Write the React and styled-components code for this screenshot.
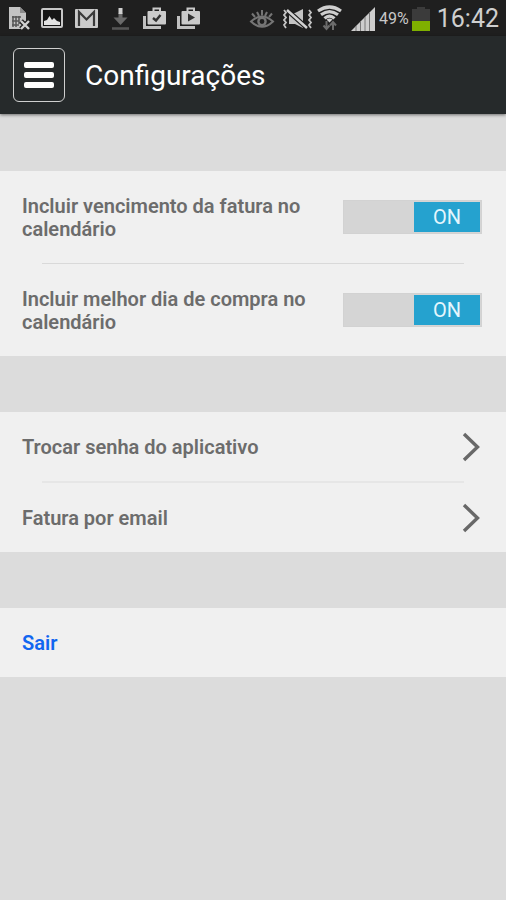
import React, { useState } from 'react'
import styled, { createGlobalStyle } from 'styled-components'

const App = () => {
  const [vencimento, setVencimento] = useState(true)
  const [melhorDia, setMelhorDia] = useState(true)

  return (
    <StPage>
      <GlobalStyle />
      <StatusBar />
      <StHeader>
        <StMenuButton type="button" aria-label="Menu">
          <StMenuLine />
          <StMenuLine />
          <StMenuLine />
        </StMenuButton>
        <StTitle>Configurações</StTitle>
      </StHeader>
      <StContent>
        <StCard>
          <SwitchRow
            label="Incluir vencimento da fatura no calendário"
            checked={vencimento}
            onChange={setVencimento}
          />
          <StDivider $size="1px" $color="#d9d9d9" />
          <SwitchRow
            label="Incluir melhor dia de compra no calendário"
            checked={melhorDia}
            onChange={setMelhorDia}
          />
        </StCard>
        <StCard>
          <LinkRow href="#senha">Trocar senha do aplicativo</LinkRow>
          <StDivider $size="2px" $color="#e6e6e6" />
          <LinkRow href="#fatura">Fatura por email</LinkRow>
        </StCard>
        <StCard>
          <StExitButton type="button">
            <StRowText>Sair</StRowText>
          </StExitButton>
        </StCard>
      </StContent>
    </StPage>
  )
}

export default App

const SwitchRow = ({ label, checked, onChange }) => (
  <StSwitchRow>
    <StRowText>{label}</StRowText>
    <StSwitchInput
      type="checkbox"
      role="switch"
      checked={checked}
      onChange={(e) => onChange(e.target.checked)}
    />
    <StTrack $on={checked} aria-hidden="true">
      <StThumb $on={checked}>{checked ? 'ON' : 'OFF'}</StThumb>
    </StTrack>
  </StSwitchRow>
)

const LinkRow = ({ href, children }) => (
  <StLinkRow href={href}>
    <StRowText>{children}</StRowText>
    <svg width="20" height="30" viewBox="0 0 20 30" fill="none" stroke="#686868" strokeWidth="3.4" aria-hidden="true">
      <path d="M2 2 L15.5 15 L2 28" />
    </svg>
  </StLinkRow>
)

const StatusBar = () => (
  <StStatusBar>
    <StNotifications>
      <StIcon width="24" height="26" viewBox="0 0 24 26">
        <path d="M3 2 H14 L20 8 V24 H3 Z" fill="#c4c4c4" />
        <path d="M14 2 V8 H20" fill="#8c8c8c" />
        <path d="M6 12 H15 M6 16 H13 M6 20 H13 M7 11 V22 M10 11 V22 M13 11 V19" stroke="#555" strokeWidth="1.5" />
        <path d="M15 16 L23 24 M23 16 L15 24" stroke="#1f1f1f" strokeWidth="5" />
        <path d="M15 16 L23 24 M23 16 L15 24" stroke="#d0d0d0" strokeWidth="2.4" />
      </StIcon>
      <StIcon width="24" height="26" viewBox="0 0 24 26">
        <rect x="2" y="4" width="20" height="18" rx="1" fill="#151515" stroke="#c8c8c8" strokeWidth="2" />
        <path d="M4 20 V16 L7 15 L9.5 11 L12 15 L14 13 L17 16 L20 17 V20 Z" fill="#e2e2e2" />
      </StIcon>
      <StIcon width="24" height="26" viewBox="0 0 24 26">
        <rect x="1" y="4" width="23" height="19" rx="1" fill="#cacaca" />
        <path d="M5 21 V7 L12.5 14.5 L20 7 V21" fill="none" stroke="#3a3a3a" strokeWidth="2.2" />
      </StIcon>
      <StIcon width="24" height="26" viewBox="0 0 24 26">
        <path d="M12.5 8 V14" stroke="#6a6a6a" strokeWidth="4" />
        <path d="M12.5 3 V9" stroke="#d0d0d0" strokeWidth="4" />
        <path d="M5.5 12.5 H19.5 L12.5 20 Z" fill="#6a6a6a" />
        <path d="M4 23.5 H21" stroke="#555" strokeWidth="2.6" />
      </StIcon>
      <StIcon width="24" height="26" viewBox="0 0 24 26">
        <Bags />
        <path d="M11 13 L14 15.5 L18.5 10" fill="none" stroke="#303030" strokeWidth="2.4" />
      </StIcon>
      <StIcon width="24" height="26" viewBox="0 0 24 26">
        <Bags />
        <path d="M12 8.5 L19 12.5 L12 16.5 Z" fill="#303030" />
      </StIcon>
    </StNotifications>
    <StSystem>
      <StIcon width="32" height="26" viewBox="0 0 32 26">
        <g fill="none" stroke="#757575" strokeWidth="2">
          <path d="M2 16.5 Q13 6.5 24 16.5 Q13 27 2 16.5 Z" />
          <path d="M3 8.5 L6 12 M8 7 L10 11 M13 5 V10.5 M18 7 L16 11 M23 8.5 L20 12" />
          <circle cx="13" cy="16.5" r="3.6" strokeWidth="2.4" />
        </g>
      </StIcon>
      <StIcon width="32" height="26" viewBox="0 0 32 26">
        <path d="M6 8 H12 L20 4 V23 L12 19 H6 Z" fill="#c4c4c4" />
        <path d="M4 5 L24 23" stroke="#1f1f1f" strokeWidth="5" />
        <path d="M4 5 L24 23" stroke="#d2d2d2" strokeWidth="2.4" />
        <path
          d="M1 5 L3 7.5 L1 10 L3 12.5 L1 15 L3 17.5 L1 20 L3 23 M26 5 L28 7.5 L26 10 L28 12.5 L26 15 L28 17.5 L26 20 L28 23"
          fill="none"
          stroke="#c4c4c4"
          strokeWidth="1.8"
        />
      </StIcon>
      <StIcon width="32" height="26" viewBox="0 0 32 26">
        <g fill="none" stroke="#cfcfcf" strokeWidth="3.2">
          <path d="M1 6 Q12.5 -2 24 6" />
          <path d="M4 9.8 Q12.5 3.5 21 9.8" />
          <path d="M7.5 13.4 Q12.5 9 17.5 13.4" />
        </g>
        <path d="M9.5 14.5 Q12.5 12.5 15.5 14.5 L12.5 17.5 Z" fill="#cfcfcf" />
        <path d="M9.5 16 V24 M6.5 20.5 L9.5 24 L12.5 20.5 M16 25 V18 M13 20.5 L16 17 L19 20.5" fill="none" stroke="#6c6c6c" strokeWidth="2" />
      </StIcon>
      <StIcon width="26" height="26" viewBox="0 0 26 26">
        <path d="M0 26 L24 2 V26 Z" fill="#cdcdcd" />
        <path d="M5 21 V26 M9.5 17 V26 M14 12 V26 M18.5 8 V26" stroke="#777" strokeWidth="1" />
      </StIcon>
      <StBattery>49%</StBattery>
      <StIcon width="24" height="26" viewBox="0 0 24 26">
        <path d="M1 4 H6 V2 H14 V4 H19 V16 H1 Z" fill="#3b3b3b" />
        <path d="M1 16 H19 V26 H1 Z" fill="#7fb000" />
      </StIcon>
      <StClock>16:42</StClock>
    </StSystem>
  </StStatusBar>
)

const Bags = () => (
  <>
    <path d="M2.5 11 V22.5 H19" fill="none" stroke="#c0c0c0" strokeWidth="3" />
    <rect x="5.5" y="6" width="18.5" height="13.5" rx="1" fill="#cacaca" />
    <path d="M11.5 7 V3.5 H18 V7" fill="none" stroke="#cacaca" strokeWidth="2" />
  </>
)

const GlobalStyle = createGlobalStyle`
  * {
    box-sizing: border-box;
  }
  body {
    margin: 0;
    background: #dcdcdc;
    font-family: Roboto, "Liberation Sans", sans-serif;
  }
  button {
    font-family: inherit;
    cursor: pointer;
  }
`

const StPage = styled.div`
  min-height: 100vh;
  background: #dcdcdc;
`

const StStatusBar = styled.div`
  display: flex;
  justify-content: space-between;
  align-items: center;
  height: 36px;
  padding: 0 7px 0 6px;
  background: #1f1f1f;
`

const StNotifications = styled.div`
  display: flex;
  align-items: center;
  gap: 10px;
`

const StSystem = styled.div`
  display: flex;
  align-items: center;
  gap: 2px;
`

const StIcon = styled.svg`
  display: block;
  flex-shrink: 0;
`

const StBattery = styled.span`
  padding-top: 2px;
  color: #c8c8c8;
  font-size: 16px;
  line-height: 24px;
`

const StClock = styled.span`
  padding-top: 2px;
  color: #cfcfcf;
  font-size: 25px;
  line-height: 34px;
`

const StHeader = styled.header`
  display: flex;
  align-items: center;
  gap: 20px;
  height: 78px;
  padding: 0 13px;
  background: #262a2b;
  box-shadow: 0 1px 3px rgba(0, 0, 0, 0.5);
`

const StMenuButton = styled.button`
  display: flex;
  flex-direction: column;
  justify-content: center;
  align-items: center;
  gap: 4px;
  width: 52px;
  height: 54px;
  padding: 0;
  border: 1px solid #d0d0d0;
  border-radius: 6px;
  background: transparent;
`

const StMenuLine = styled.span`
  width: 30px;
  height: 6px;
  border-radius: 2px;
  background: #fff;
`

const StTitle = styled.h1`
  margin: 0;
  padding-top: 2px;
  color: #fff;
  font-size: 28px;
  font-weight: 400;
  line-height: 36px;
`

const StContent = styled.main`
  display: flex;
  flex-direction: column;
  gap: 56px;
  padding: 57px 0;
`

const StCard = styled.section`
  background: #f0f0f0;
`

const StDivider = styled.hr`
  height: ${({ $size }) => $size};
  margin: 0 42px;
  border: 0;
  background: ${({ $color }) => $color};
`

const StRowText = styled.span`
  flex: 1;
  padding-top: 2px;
  font-size: 20px;
  font-weight: 600;
  line-height: 23px;
`

const StSwitchRow = styled.label`
  display: flex;
  align-items: center;
  justify-content: space-between;
  gap: 24px;
  min-height: 92px;
  padding: 0 24px 0 22px;
  color: #6c6c6c;
  cursor: pointer;
`

// 기본 체크박스는 숨기고 트랙만 보여줌
const StSwitchInput = styled.input`
  position: absolute;
  opacity: 0;
`

const StTrack = styled.span`
  display: flex;
  justify-content: ${({ $on }) => ($on ? 'flex-end' : 'flex-start')};
  width: 139px;
  height: 34px;
  padding: 1px;
  border: 1px solid #d2d2d2;
  background: #d5d5d5;
`

const StThumb = styled.span`
  width: 66px;
  background: ${({ $on }) => ($on ? '#25a2cf' : '#9a9a9a')};
  color: #e4f6fd;
  font-size: 20px;
  line-height: 30px;
  text-align: center;
`

const StLinkRow = styled.a`
  display: flex;
  align-items: center;
  justify-content: space-between;
  min-height: 69px;
  padding: 0 24px 0 22px;
  color: #6c6c6c;
  text-decoration: none;
`

const StExitButton = styled.button`
  display: flex;
  align-items: center;
  width: 100%;
  min-height: 69px;
  padding: 0 22px;
  border: 0;
  background: transparent;
  color: #1166f0;
  text-align: left;
`
